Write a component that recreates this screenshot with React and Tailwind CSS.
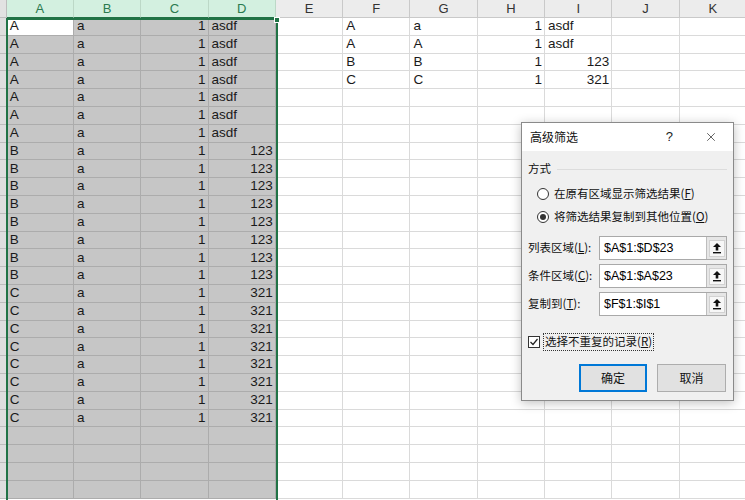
import { X } from "lucide-react";

const COLS = ["A", "B", "C", "D", "E", "F", "G", "H", "I", "J", "K"];

const leftData = [
  ...Array.from({ length: 7 }, () => ["A", "a", 1, "asdf"]),
  ...Array.from({ length: 8 }, () => ["B", "a", 1, 123]),
  ...Array.from({ length: 8 }, () => ["C", "a", 1, 321]),
];

const rightData = [
  ["A", "a", 1, "asdf"],
  ["A", "A", 1, "asdf"],
  ["B", "B", 1, 123],
  ["C", "C", 1, 321],
];

const ROW_COUNT = 27;

const Cell = ({ value, selected, active }) => {
  const isNum = typeof value === "number";
  return (
    <div
      className={`w-[67.3px] shrink-0 h-full border-r border-b flex items-end pb-[2px] leading-none text-[13.5px] text-[#1a1a1a] overflow-hidden whitespace-nowrap ${
        isNum ? "justify-end pr-[2px]" : "justify-start pl-[3px]"
      } ${
        active
          ? "bg-white border-[#acacac]"
          : selected
          ? "bg-[#c6c6c6] border-[#acacac]"
          : "bg-white border-[#dadada]"
      }`}
    >
      {value}
    </div>
  );
};

const Radio = ({ checked, children }) => (
  <div className="flex items-center gap-[5px] pl-[9px] h-[17px]">
    <div className="w-[12px] h-[12px] rounded-full border border-[#333] bg-white flex items-center justify-center">
      {checked && <div className="w-[6px] h-[6px] rounded-full bg-[#333]" />}
    </div>
    <span>{children}</span>
  </div>
);

const RefIcon = () => (
  <svg width="10" height="12" viewBox="0 0 10 12">
    <path d="M5 1 L9 5 L6.3 5 L6.3 8.5 L3.7 8.5 L3.7 5 L1 5 Z" fill="#111" />
    <rect x="1" y="10" width="8" height="1.4" fill="#111" />
  </svg>
);

const RangeField = ({ label, value }) => (
  <div className="flex items-center h-[24px]">
    <div className="w-[71px] shrink-0">{label}</div>
    <div className="w-[129px] h-full flex border border-[#a9a9a9] bg-white">
      <div className="flex-1 flex items-center pl-[4px] text-[12.5px] font-['Liberation_Sans',sans-serif] text-black">
        {value}
      </div>
      <div className="w-[20px] h-full bg-[#e6e6e6] border-l border-[#bdbdbd] flex items-center justify-center">
        <div className="w-[16px] h-[17px] bg-[#f7f7f7] border border-[#d2d2d2] flex items-center justify-center">
          <RefIcon />
        </div>
      </div>
    </div>
  </div>
);

const Dialog = () => (
  <div className="absolute left-[521px] top-[122px] w-[213px] h-[279px] border border-[#8a8a8a] bg-[#f0f0f0] shadow-[0_2px_10px_rgba(0,0,0,0.25)] font-['Noto_Sans_CJK_SC',sans-serif] text-[11.5px] text-[#111]">
    <div className="h-[28px] bg-white flex items-center pl-[8px] pr-[15px]">
      <span className="text-[12px]">高级筛选</span>
      <span className="ml-auto text-[13px] font-['Liberation_Sans',sans-serif] text-[#222]">?</span>
      <X className="ml-[31px] text-[#222]" size={14} strokeWidth={1.2} />
    </div>
    <div className="px-[6px]">
      <div className="mt-[10px] h-[16px] flex items-center gap-[6px]">
        <span>方式</span>
        <div className="flex-1 h-px bg-[#dcdcdc]" />
      </div>
      <div className="mt-[8px]">
        <Radio>
          在原有区域显示筛选结果(<span className="underline">F</span>)
        </Radio>
      </div>
      <div className="mt-[6px]">
        <Radio checked>
          将筛选结果复制到其他位置(<span className="underline">O</span>)
        </Radio>
      </div>
      <div className="mt-[11px]">
        <RangeField
          label={<>列表区域(<span className="underline">L</span>):</>}
          value="$A$1:$D$23"
        />
      </div>
      <div className="mt-[4px]">
        <RangeField
          label={<>条件区域(<span className="underline">C</span>):</>}
          value="$A$1:$A$23"
        />
      </div>
      <div className="mt-[4px]">
        <RangeField
          label={<>复制到(<span className="underline">T</span>):</>}
          value="$F$1:$I$1"
        />
      </div>
      <div className="mt-[17px] h-[18px] flex items-center gap-[3px]">
        <div className="w-[12px] h-[12px] border border-[#333] bg-white flex items-center justify-center">
          <svg width="10" height="10" viewBox="0 0 10 10">
            <path d="M1.5 5 L4 7.5 L8.5 2" fill="none" stroke="#222" strokeWidth="1.2" />
          </svg>
        </div>
        <span className="h-full flex items-center border border-dotted border-[#333] px-[1px]">
          选择不重复的记录(<span className="underline">R</span>)
        </span>
      </div>
      <div className="mt-[13px] flex justify-end gap-[10px] pr-[1px]">
        <button className="w-[68px] h-[28px] bg-[#e1e1e1] border-2 border-[#0078d7] text-[12px]">
          确定
        </button>
        <button className="w-[69px] h-[28px] bg-[#e1e1e1] border border-[#adadad] text-[12px]">
          取消
        </button>
      </div>
    </div>
  </div>
);

export default function App() {
  return (
    <div className="relative w-[745px] h-[500px] overflow-hidden bg-white font-['Liberation_Sans',sans-serif]">
      {/* column headers */}
      <div className="flex h-[18px]">
        <div className="w-[6.7px] shrink-0 h-full bg-[#e2e2e2] border-r border-b border-[#bdbdbd]" />
        {COLS.map((c, i) => (
          <div
            key={c}
            className={`w-[67.3px] shrink-0 h-full flex items-center justify-center text-[13px] border-r border-b ${
              i < 4
                ? "bg-[#d3f0e0] text-[#2b7a4f] border-r-[#bcd8c7] border-b-[#217346]"
                : "bg-[#ececec] text-[#333] border-[#c9c9c9]"
            }`}
          >
            {c}
          </div>
        ))}
      </div>

      {/* rows */}
      {Array.from({ length: ROW_COUNT }, (_, r) => (
        <div key={r} className="flex h-[17.8px]">
          <div className="w-[6.7px] shrink-0 h-full bg-[#dedede] border-r border-b border-[#bdbdbd]" />
          {COLS.map((c, i) => {
            let value = "";
            if (i < 4 && leftData[r]) value = leftData[r][i];
            if (i >= 5 && i <= 8 && rightData[r]) value = rightData[r][i - 5];
            return (
              <Cell
                key={c}
                value={value}
                selected={i < 4}
                active={i === 0 && r === 0}
              />
            );
          })}
        </div>
      ))}

      {/* selection border */}
      <div className="absolute left-[6px] top-[18px] w-[272px] h-[520px] border-2 border-[#217346] pointer-events-none" />
      <div className="absolute left-[274px] top-[17px] w-[6px] h-[6px] bg-[#217346] border border-white" />

      <Dialog />
    </div>
  );
}
